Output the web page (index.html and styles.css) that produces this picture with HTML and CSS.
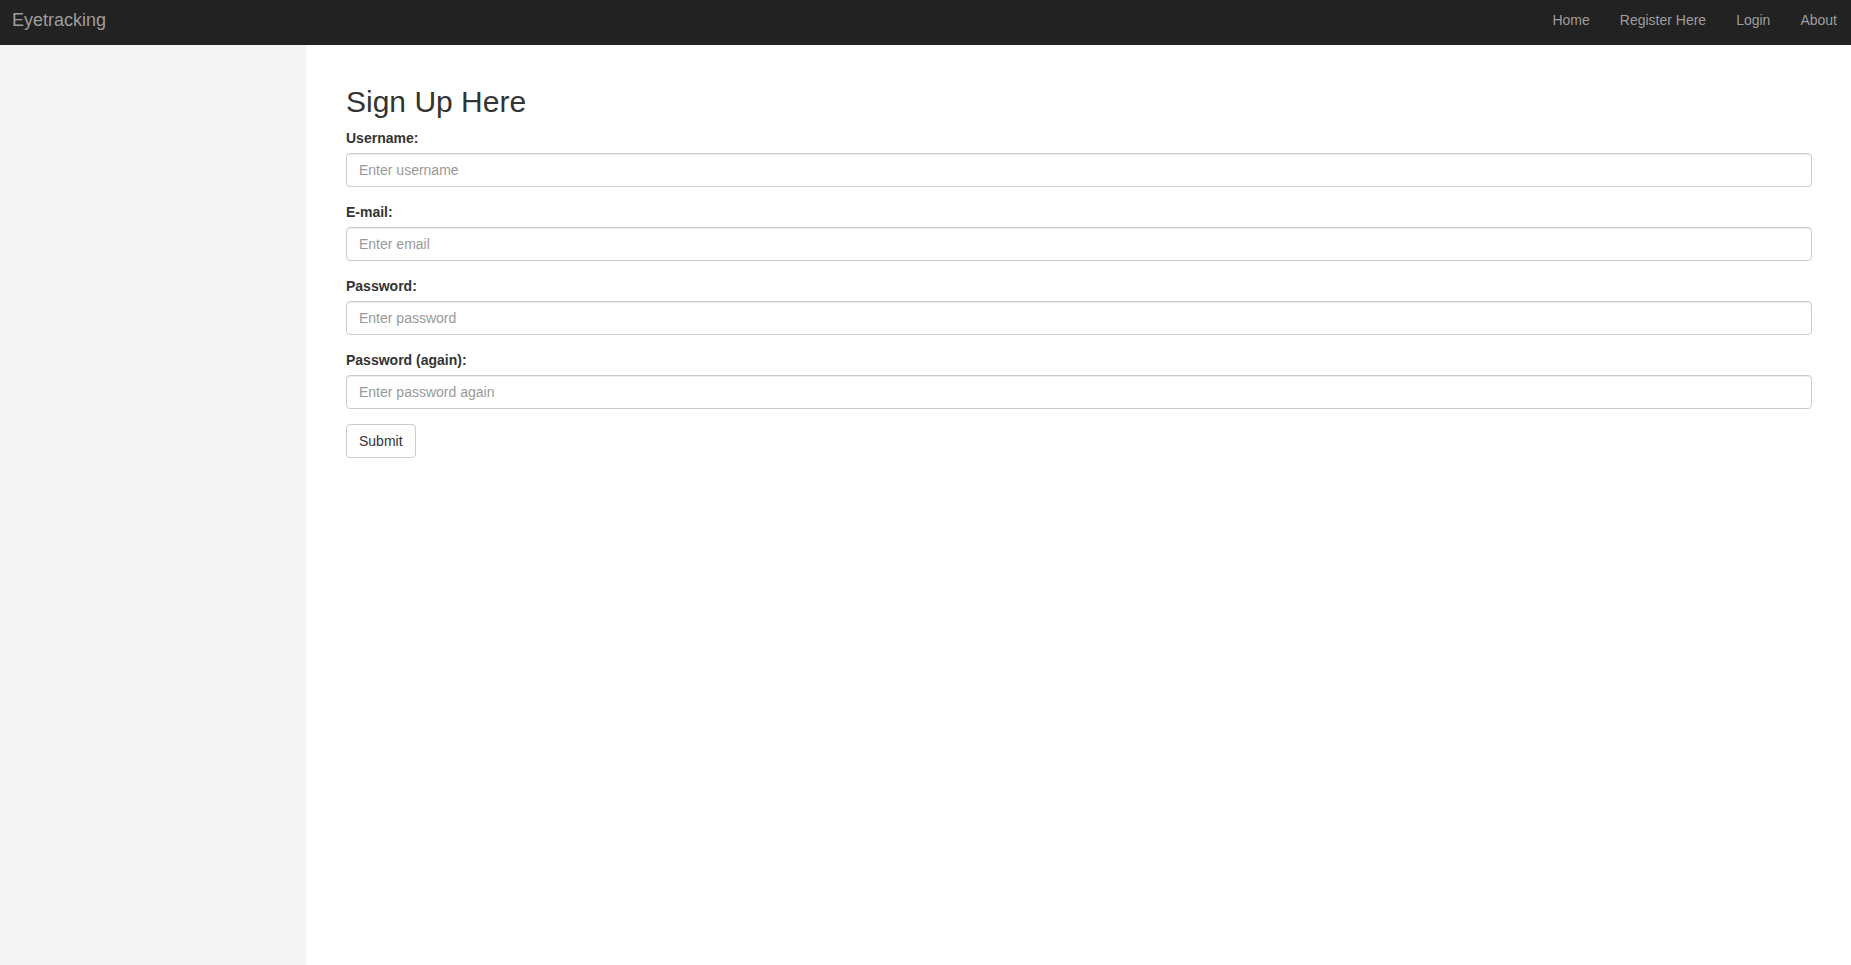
FILE: index.html
```html
<!DOCTYPE html>
<html lang="en">
<head>
<meta charset="utf-8">
<title>Eyetracking - Sign Up</title>
<link rel="stylesheet" href="styles.css">
</head>
<body>
<nav class="navbar">
  <a class="brand" href="#">Eyetracking</a>
  <ul class="nav-links">
    <li><a href="#">Home</a></li>
    <li><a href="#">Register Here</a></li>
    <li><a href="#">Login</a></li>
    <li><a href="#">About</a></li>
  </ul>
</nav>
<div class="layout">
  <aside class="sidebar"></aside>
  <main class="main">
    <h2 class="title">Sign Up Here</h2>
    <form class="signup">
      <div class="form-group">
        <label for="username">Username:</label>
        <input id="username" class="form-control" type="text" placeholder="Enter username">
      </div>
      <div class="form-group">
        <label for="email">E-mail:</label>
        <input id="email" class="form-control" type="email" placeholder="Enter email">
      </div>
      <div class="form-group">
        <label for="password">Password:</label>
        <input id="password" class="form-control" type="password" placeholder="Enter password">
      </div>
      <div class="form-group">
        <label for="password2">Password (again):</label>
        <input id="password2" class="form-control" type="password" placeholder="Enter password again">
      </div>
      <button type="submit" class="btn">Submit</button>
    </form>
  </main>
</div>
</body>
</html>
```
FILE: styles.css
```css
* {
  box-sizing: border-box;
}

html, body {
  margin: 0;
  padding: 0;
}

body {
  font-family: "Liberation Sans", Arial, Helvetica, sans-serif;
  font-size: 14px;
  line-height: 1.42857143;
  color: #333;
  background: #fff;
  min-height: 100vh;
  display: flex;
  flex-direction: column;
}

.navbar {
  display: flex;
  align-items: flex-start;
  height: 45px;
  background: #222;
  flex-shrink: 0;
}

.brand {
  display: block;
  padding: 10px 15px 15px 12px;
  font-size: 18px;
  line-height: 20px;
  color: #9d9d9d;
  text-decoration: none;
}

.nav-links {
  display: flex;
  margin: 0 0 0 auto;
  padding: 0;
  list-style: none;
}

.nav-links a {
  display: block;
  padding: 10px 15px 15px;
  line-height: 20px;
  color: #9d9d9d;
  text-decoration: none;
}

.nav-links li:last-child a {
  padding-right: 14px;
}

.layout {
  flex: 1;
  display: flex;
}

.sidebar {
  width: 306px;
  flex-shrink: 0;
  background: #f5f5f5;
  border-right: 1px solid #eee;
}

.main {
  flex: 1;
  padding: 20px 39px 0 40px;
}

.title {
  margin: 20px 0 10px;
  font-size: 30px;
  font-weight: 500;
  line-height: 1.1;
  color: #333;
}

.form-group {
  margin-bottom: 15px;
}

.form-group label {
  display: block;
  margin-bottom: 5px;
  font-weight: bold;
}

.form-control {
  display: block;
  width: 100%;
  height: 34px;
  padding: 6px 12px;
  font-family: inherit;
  font-size: 14px;
  line-height: 1.42857143;
  color: #555;
  background: #fff;
  border: 1px solid #ccc;
  border-radius: 4px;
  box-shadow: inset 0 1px 1px rgba(0, 0, 0, 0.075);
}

.form-control::placeholder {
  color: #999;
}

.btn {
  display: inline-block;
  height: 34px;
  padding: 6px 12px;
  font-family: inherit;
  font-size: 14px;
  line-height: 1.42857143;
  color: #333;
  background: #fff;
  border: 1px solid #ccc;
  border-radius: 4px;
  cursor: pointer;
}
```
